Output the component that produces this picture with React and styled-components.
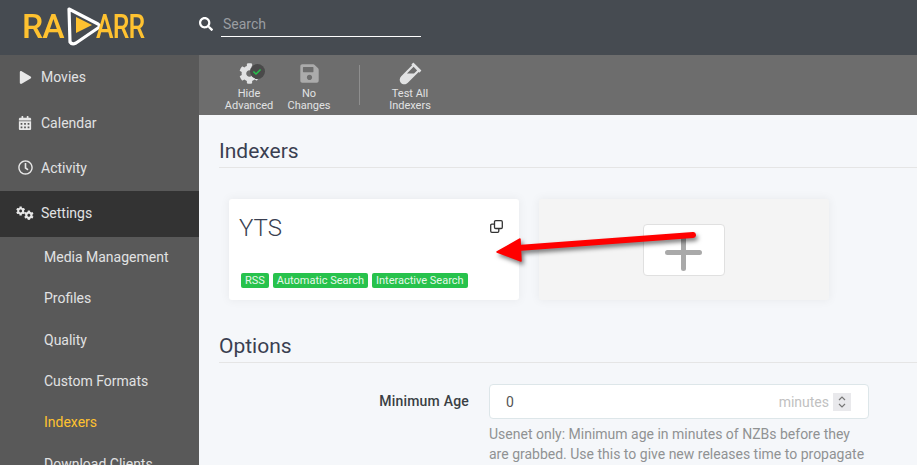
import React from "react";
import styled, { createGlobalStyle } from "styled-components";
import {
  FaPlay,
  FaCalendarAlt,
  FaRegClock,
  FaSearch,
  FaCog,
  FaCheck,
  FaSave,
  FaVial,
} from "react-icons/fa";

const GlobalStyle = createGlobalStyle`
  html, body {
    margin: 0;
    height: 100%;
    overflow: hidden;
  }
  body {
    font-family: Roboto, "Liberation Sans", sans-serif;
    font-size: 14px;
    color: #515253;
  }
`;

const Page = styled.div`
  position: relative;
  display: grid;
  grid-template-columns: 199px 1fr;
  grid-template-rows: 55px 1fr;
  width: 917px;
  height: 465px;
  overflow: hidden;
  background: #f5f7fa;
`;

const Header = styled.header`
  grid-column: 1 / 3;
  display: flex;
  align-items: center;
  background: #464b51;
`;

const Logo = styled.div`
  display: flex;
  align-items: center;
  width: 199px;
  height: 55px;
  padding-left: 22px;
  box-sizing: border-box;
`;

const LogoText = styled.span`
  display: inline-block;
  flex: none;
  width: ${(p) => p.$width}px;
  margin-bottom: 3px;
  margin-left: ${(p) => p.$offset || 0}px;
  font-family: Roboto, sans-serif;
  font-size: 33px;
  font-weight: 500;
  letter-spacing: -1px;
  line-height: 1;
  color: #ffc230;
  white-space: nowrap;
  transform: scaleX(${(p) => p.$squeeze || 1});
  transform-origin: left center;
`;

const SearchBox = styled.div`
  display: flex;
  align-items: center;
  gap: 8px;
  padding-bottom: 8px;
  color: #fff;
  font-size: 14px;
`;

const SearchField = styled.div`
  width: 200px;
  height: 24px;
  line-height: 22px;
  margin-top: 2px;
  padding-left: 2px;
  box-sizing: border-box;
  border-bottom: 1px solid #fff;
  color: #9a9da1;
`;

const Sidebar = styled.nav`
  background: #595959;
  overflow: hidden;
  color: #e1e2e3;
`;

const NavItem = styled.div`
  display: flex;
  align-items: center;
  height: 45.4px;
  padding-bottom: 1px;
  box-sizing: border-box;
  background: ${(p) => (p.$active ? "#333333" : "transparent")};
  font-size: 14px;
`;

const NavIcon = styled.span`
  display: flex;
  justify-content: center;
  width: 18px;
  margin-left: 16px;
  margin-right: 7px;
  font-size: ${(p) => p.$size || 14}px;
  color: #e8e8e8;
`;

const GearPair = styled.span`
  display: flex;
  width: 18px;
  height: 14px;
  font-size: 10px;
  color: #e8e8e8;

  svg:first-child {
    align-self: flex-start;
  }
  svg:last-child {
    align-self: flex-end;
    margin-left: -1px;
    font-size: 10.5px;
  }
`;

const SubItem = styled.div`
  display: flex;
  align-items: center;
  height: 41.4px;
  padding-left: 44px;
  padding-bottom: 1px;
  box-sizing: border-box;
  color: ${(p) => (p.$active ? "#ffc230" : "#e1e2e3")};
  white-space: nowrap;
`;

const Main = styled.main`
  display: flex;
  flex-direction: column;
  min-width: 0;
`;

const Toolbar = styled.div`
  display: flex;
  align-items: center;
  flex: 0 0 60px;
  padding-left: 20px;
  background: #6d6d6d;
`;

const ToolButton = styled.div`
  display: flex;
  flex-direction: column;
  align-items: center;
  width: 60px;
  height: 60px;
  padding-top: 7px;
  box-sizing: border-box;
  color: #e1e2e3;
  font-size: 11px;
  line-height: 12px;
  text-align: center;
`;

const ToolIcon = styled.span`
  position: relative;
  display: flex;
  justify-content: center;
  align-items: center;
  height: 22px;
  margin-bottom: 4px;
  font-size: ${(p) => p.$size || 21}px;
  color: ${(p) => p.$color || "#e1e2e3"};
`;

const CheckBadge = styled.span`
  position: absolute;
  top: 2px;
  left: 11px;
  display: flex;
  align-items: center;
  justify-content: center;
  width: 15px;
  height: 15px;
  border-radius: 50%;
  background: #4a4a4a;
  color: #27c24c;
  font-size: 8px;
`;

const Separator = styled.div`
  width: 1px;
  height: 40px;
  margin: 0 20px;
  background: #8e8e8e;
`;

const Content = styled.div`
  flex: 1;
  padding: 20px 0 0 20px;
  overflow: hidden;
`;

const SectionTitle = styled.h2`
  margin: 0 0 ${(p) => p.$gap}px;
  height: 32px;
  line-height: 33px;
  font-size: 21px;
  font-weight: 400;
  color: #3a3f51;
  border-bottom: 1px solid #e5e5e5;
`;

const CardRow = styled.div`
  display: flex;
  gap: 20px;
  padding-left: 10px;
  margin-bottom: 30px;
`;

const Card = styled.div`
  position: relative;
  width: 290px;
  height: 101px;
  padding: 10px;
  box-sizing: border-box;
  border-radius: 3px;
  background: #fff;
  box-shadow: 0 0 10px 1px rgba(0, 0, 0, 0.05);
`;

const CardName = styled.div`
  font-size: 24px;
  font-weight: 300;
  line-height: 39px;
  color: #3a3f51;
`;

const CloneButton = styled.svg`
  position: absolute;
  top: 21px;
  right: 16px;
`;

const Tags = styled.div`
  position: absolute;
  left: 12px;
  top: 74px;
  display: flex;
  gap: 4px;
`;

const Tag = styled.span`
  height: 15px;
  padding: 0 4px;
  border-radius: 2px;
  background: #27c24c;
  color: #e6f8ea;
  font-size: 11px;
  line-height: 15px;
`;

const AddCard = styled(Card)`
  display: flex;
  align-items: center;
  justify-content: center;
  background: #f4f4f4;
  padding: 0;
`;

const AddBox = styled.div`
  display: flex;
  align-items: center;
  justify-content: center;
  width: 82px;
  height: 52px;
  padding-top: 5px;
  padding-right: 1px;
  box-sizing: border-box;
  border: 1px solid #e0e0e0;
  border-radius: 4px;
  background: #fff;
`;

const FormRow = styled.div`
  display: flex;
  align-items: flex-start;
`;

const FormLabel = styled.label`
  flex: 0 0 250px;
  height: 34px;
  line-height: 34px;
  text-align: right;
  font-weight: 500;
  letter-spacing: 0.2px;
  color: #3a3f44;
`;

const FormField = styled.div`
  width: 380px;
  margin-left: 20px;
`;

const NumberInput = styled.div`
  display: flex;
  align-items: center;
  height: 35px;
  padding: 0 17px 0 16px;
  box-sizing: border-box;
  border: 1px solid #dde6e9;
  border-radius: 4px;
  background: #fff;
  color: #555;
`;

const Unit = styled.span`
  margin-left: auto;
  margin-right: 4px;
  color: #c1c1c1;
`;

const Stepper = styled.span`
  display: flex;
  align-items: center;
  justify-content: center;
  width: 18px;
  height: 18px;
  background: #e9e9ec;
`;

const HelpText = styled.div`
  margin-top: 5px;
  line-height: 20px;
  color: #909293;
`;

const ArrowOverlay = styled.svg`
  position: absolute;
  left: 0;
  top: 0;
  pointer-events: none;
  overflow: visible;
  filter: drop-shadow(2px 3px 2px rgba(0, 0, 0, 0.5));
`;

const topNav = [
  { label: "Movies", icon: <FaPlay />, size: 13 },
  { label: "Calendar", icon: <FaCalendarAlt />, size: 14 },
  { label: "Activity", icon: <FaRegClock />, size: 15 },
  { label: "Settings", icon: <GearPair><FaCog /><FaCog /></GearPair>, active: true },
];

const subNav = ["Media Management", "Profiles", "Quality", "Custom Formats", "Indexers", "Download Clients"];

export default function App() {
  return (
    <Page>
      <GlobalStyle />
      <Header>
        <Logo>
          <LogoText $width={45} $squeeze={1.02}>RA</LogoText>
          <svg width="36" height="42" viewBox="0 0 36 42" style={{ flex: "none", marginBottom: "3px" }}>
            <path d="M2 4 L31 19 Q34 21 31 23 L9 38 Q5 40 3 37 L2 4 Z" fill="none" stroke="#fff" strokeWidth="3.2" strokeLinejoin="round" />
            <path d="M9 12 L25 20 L9 28 Z" fill="#ffc230" />
          </svg>
          <LogoText $width={48} $offset={-7} $squeeze={0.8}>ARR</LogoText>
        </Logo>
        <SearchBox>
          <FaSearch size={14} />
          <SearchField>Search</SearchField>
        </SearchBox>
      </Header>
      <Sidebar>
        {topNav.map((item) => (
          <NavItem key={item.label} $active={item.active}>
            <NavIcon $size={item.size}>{item.icon}</NavIcon>
            {item.label}
          </NavItem>
        ))}
        {subNav.map((label) => (
          <SubItem key={label} $active={label === "Indexers"}>{label}</SubItem>
        ))}
      </Sidebar>
      <Main>
        <Toolbar>
          <ToolButton>
            <ToolIcon>
              <FaCog />
              <CheckBadge><FaCheck /></CheckBadge>
            </ToolIcon>
            Hide<br />Advanced
          </ToolButton>
          <ToolButton>
            <ToolIcon $color="#ababab"><FaSave /></ToolIcon>
            No<br />Changes
          </ToolButton>
          <Separator />
          <ToolButton>
            <ToolIcon $size={23}><FaVial /></ToolIcon>
            Test All<br />Indexers
          </ToolButton>
        </Toolbar>
        <Content>
          <SectionTitle $gap={31}>Indexers</SectionTitle>
          <CardRow>
            <Card>
              <CardName>YTS</CardName>
              <CloneButton width="13" height="13" viewBox="0 0 13 13">
                <rect x="4.5" y="0.7" width="7.8" height="7.8" rx="1.2" fill="none" stroke="#333" strokeWidth="1.3" />
                <path d="M4.5 4.2 H1.9 Q0.7 4.2 0.7 5.4 V11.1 Q0.7 12.3 1.9 12.3 H7.6 Q8.8 12.3 8.8 11.1 V8.5" fill="none" stroke="#333" strokeWidth="1.3" />
              </CloneButton>
              <Tags>
                <Tag>RSS</Tag>
                <Tag>Automatic Search</Tag>
                <Tag>Interactive Search</Tag>
              </Tags>
            </Card>
            <AddCard>
              <AddBox>
                <svg width="37" height="37" viewBox="0 0 37 37">
                  <path d="M2.5 18.5 H34.5 M18.5 2.5 V34.5" stroke="#a9a9a9" strokeWidth="5" strokeLinecap="round" />
                </svg>
              </AddBox>
            </AddCard>
          </CardRow>
          <SectionTitle $gap={21}>Options</SectionTitle>
          <FormRow>
            <FormLabel>Minimum Age</FormLabel>
            <FormField>
              <NumberInput>
                0
                <Unit>minutes</Unit>
                <Stepper>
                  <svg width="10" height="14" viewBox="0 0 10 14">
                    <path d="M2 5 L5 2 L8 5 M2 9 L5 12 L8 9" fill="none" stroke="#777" strokeWidth="1.2" />
                  </svg>
                </Stepper>
              </NumberInput>
              <HelpText>
                Usenet only: Minimum age in minutes of NZBs before they are grabbed. Use this to give new releases time to propagate
              </HelpText>
            </FormField>
          </FormRow>
        </Content>
      </Main>
      <ArrowOverlay width="917" height="465" viewBox="0 0 917 465">
        <path d="M693 235 L518 248" stroke="#ff0000" strokeWidth="6" strokeLinecap="round" />
        <path d="M497 252 L520 239 L521 261 Z" fill="#ff0000" stroke="#ff0000" strokeWidth="1.5" strokeLinejoin="round" />
      </ArrowOverlay>
    </Page>
  );
}
